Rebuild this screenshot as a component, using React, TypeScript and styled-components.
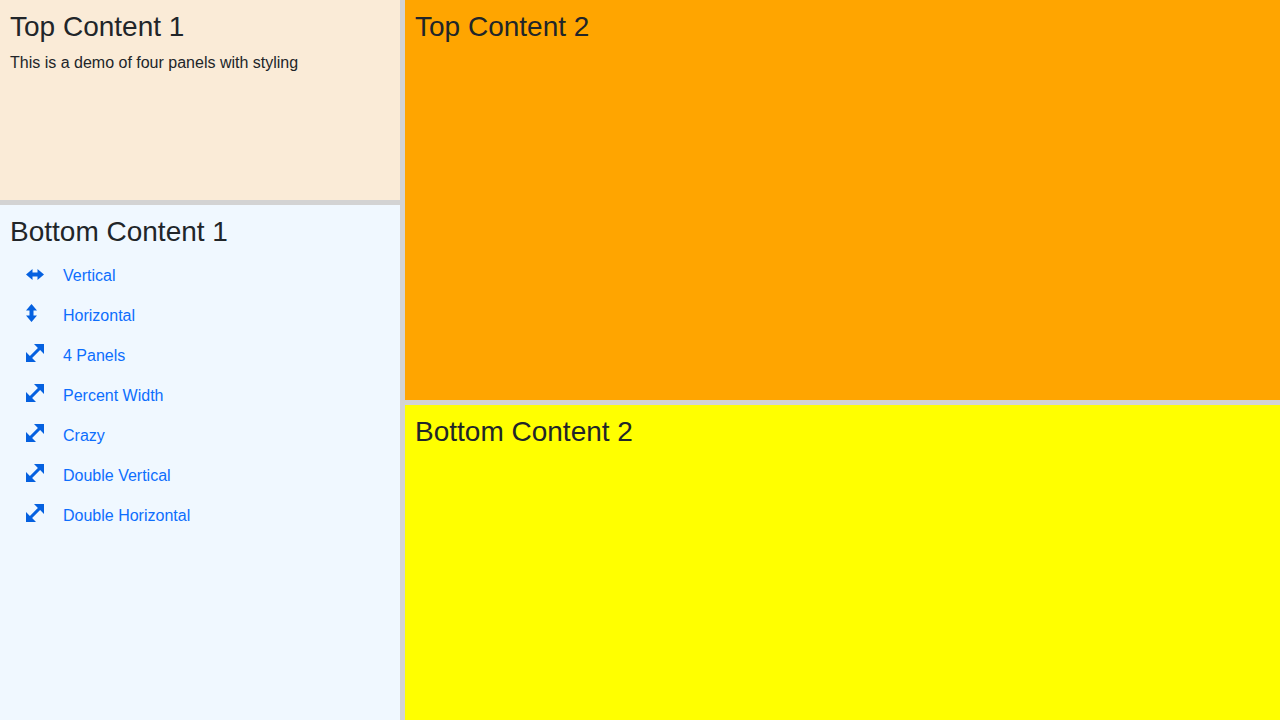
import React from 'react';
import styled, { createGlobalStyle } from 'styled-components';

const GlobalStyle = createGlobalStyle`
    html, body {
        margin : 0;
        height : 100%;
        overflow : hidden;
    }
    body {
        font-family : "Liberation Sans", Arial, sans-serif;
        font-size : 16px;
        line-height : 1.5;
        color : #212529;
    }
    * {
        box-sizing : border-box;
    }
`

const Page = styled.div`
    width : 1280px;
    height : 720px;
    display : flex;
    flex-direction : row;
`

const Column = styled.div<{ $width: string }>`
    width : ${(props) => props.$width};
    height : 100%;
    display : flex;
    flex-direction : column;
`

const Divider = styled.div`
    width : 5px;
    height : 100%;
    background-color : #d3d3d3;
`

const HDivider = styled.div`
    width : 100%;
    height : 5px;
    background-color : #d3d3d3;
`

const Panel = styled.div<{ $bg: string; $height?: string }>`
    background-color : ${(props) => props.$bg};
    height : ${(props) => props.$height || 'auto'};
    flex : ${(props) => (props.$height ? 'none' : '1')};
    padding : 10px;
`

const Title = styled.h3`
    margin : 0 0 7.4px 0;
    font-size : 28px;
    font-weight : 400;
    line-height : 1.2;
`

const Text = styled.p`
    margin : 0;
`

const NavList = styled.ul`
    list-style : none;
    margin : 0;
    padding : 0;
`

const NavItem = styled.li`
    height : 40px;
    padding : 8px 16px;
    display : flex;
    align-items : flex-start;
`

const IconSlot = styled.span`
    width : 37px;
    height : 18px;
    display : flex;
    color : #0561e0;

    svg {
        display : block;
        width : 18px;
        height : 18px;
        fill : currentColor;
    }
`

const NavLink = styled.a`
    color : #0d6efd;
    text-decoration : none;
    cursor : pointer;
`

const ArrowsH = () => (
    <svg viewBox="0 0 18 18"><path d="M0 10.5 6.5 5V8.5H11.5V5L18 10.5 11.5 16V12.5H6.5V16Z" /></svg>
)

const ArrowsV = () => (
    <svg viewBox="0 0 18 18"><path d="M5.5 0 11 6.5H7.5V11.5H11L5.5 18 0 11.5H3.5V6.5H0Z" /></svg>
)

const Expand = () => (
    <svg viewBox="0 0 18 18"><path d="M18 0V10L14.1 6.1 6.1 14.1 10 18H0V8L3.9 11.9 11.9 3.9 8 0Z" /></svg>
)

const items = [
    { label: 'Vertical', Icon: ArrowsH },
    { label: 'Horizontal', Icon: ArrowsV },
    { label: '4 Panels', Icon: Expand },
    { label: 'Percent Width', Icon: Expand },
    { label: 'Crazy', Icon: Expand },
    { label: 'Double Vertical', Icon: Expand },
    { label: 'Double Horizontal', Icon: Expand },
];

const App = () => {
    return (
        <Page>
            <GlobalStyle />
            <Column $width="400px">
                <Panel $bg="#faebd7" $height="200px">
                    <Title>Top Content 1</Title>
                    <Text>This is a demo of four panels with styling</Text>
                </Panel>
                <HDivider />
                <Panel $bg="#f0f8ff">
                    <Title>Bottom Content 1</Title>
                    <NavList>
                        {items.map((i) => (
                            <NavItem key={i.label}>
                                <IconSlot><i.Icon /></IconSlot>
                                <NavLink>{i.label}</NavLink>
                            </NavItem>
                        ))}
                    </NavList>
                </Panel>
            </Column>
            <Divider />
            <Column $width="875px">
                <Panel $bg="#ffa500" $height="400px">
                    <Title>Top Content 2</Title>
                </Panel>
                <HDivider />
                <Panel $bg="#ffff00">
                    <Title>Bottom Content 2</Title>
                </Panel>
            </Column>
        </Page>
    )
}

export default App;
